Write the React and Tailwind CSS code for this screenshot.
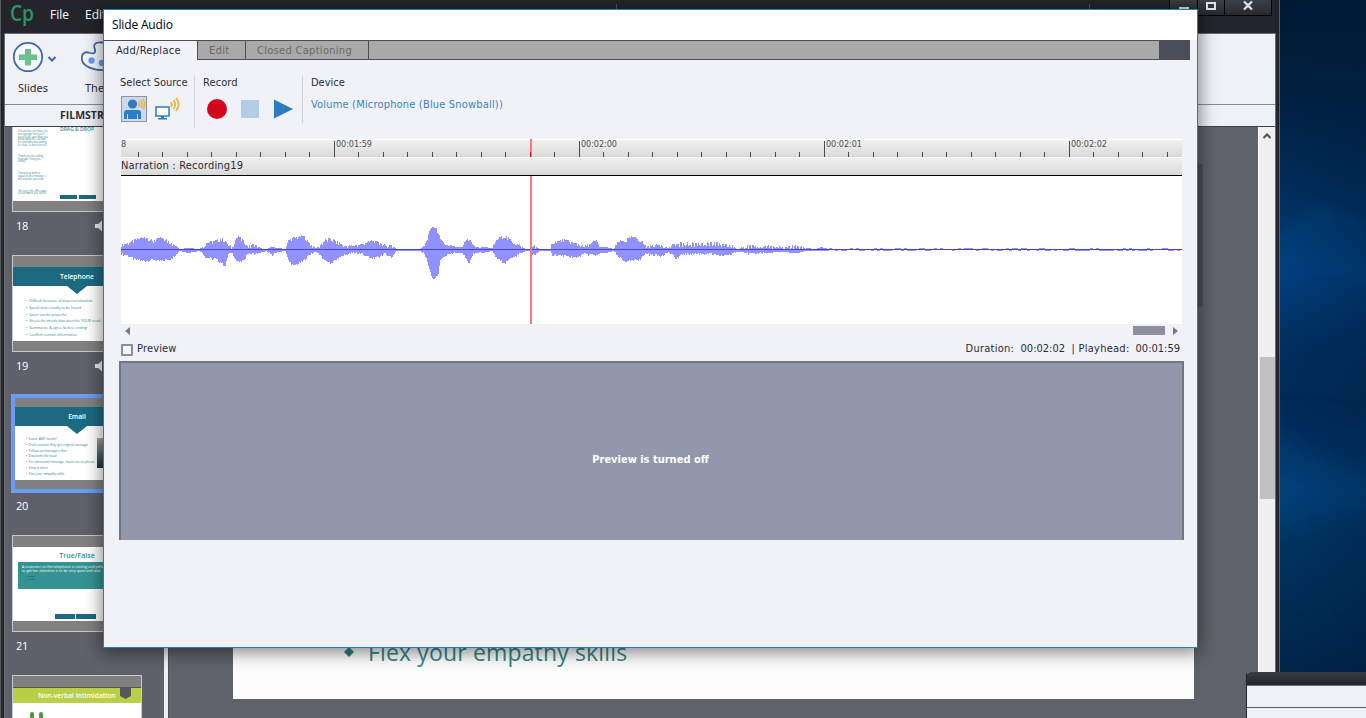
import React from 'react';

// [x, height above the axis, height below the axis]
const ENVELOPE = [
  [0, 5, 4], [7, 7, 6], [14, 10, 10], [24, 13, 11], [31, 9, 10], [39, 12, 11], [47, 9, 10],
  [54, 4, 6], [58, 1, 1], [67, 2, 3], [78, 1, 1], [81, 3, 3], [85, 7, 8], [94, 9, 9],
  [100, 11, 13], [104, 9, 16], [107, 4, 4], [111, 3, 3], [115, 12, 11], [118, 13, 12],
  [122, 9, 11], [126, 4, 4], [133, 5, 4], [141, 1, 2], [145, 1, 1], [150, 3, 5], [157, 2, 2],
  [164, 1, 1], [167, 10, 11], [172, 12, 16], [182, 14, 11], [189, 6, 4], [194, 2, 2],
  [197, 3, 3], [204, 10, 11], [209, 11, 14], [217, 7, 8], [224, 4, 5], [231, 4, 3],
  [241, 6, 4], [250, 9, 9], [257, 8, 7], [264, 4, 4], [270, 5, 8], [275, 1, 1], [299, 1, 1],
  [303, 4, 4], [306, 12, 12], [308, 19, 20], [311, 23, 29], [314, 22, 29], [317, 18, 23],
  [319, 10, 11], [324, 5, 6], [334, 3, 3], [341, 3, 3], [344, 9, 8], [348, 12, 13],
  [352, 4, 4], [359, 2, 2], [361, 3, 3], [371, 2, 1], [374, 8, 7], [379, 13, 11],
  [384, 14, 13], [389, 10, 9], [396, 6, 5], [404, 1, 1], [409, 1, 1], [413, 4, 6],
  [418, 1, 1], [429, 1, 1], [431, 8, 5], [441, 10, 6], [454, 7, 8], [462, 3, 4],
  [469, 6, 5], [475, 9, 6], [479, 3, 3], [485, 3, 3], [492, 1, 1], [497, 8, 7],
  [504, 10, 12], [511, 13, 11], [519, 10, 9], [524, 4, 4], [539, 5, 6], [547, 2, 2],
  [551, 5, 5], [555, 6, 9], [562, 7, 4], [589, 7, 4], [597, 7, 6], [609, 5, 5],
  [616, 1, 2], [621, 3, 2], [629, 4, 4], [644, 4, 3], [659, 3, 2], [676, 4, 3],
  [685, 2, 1], [694, 1, 1], [700, 3, 1], [707, 1, 1], [1061, 1, 1],
];

const noise = (x) => {
  const v = Math.sin(x * 12.9898) * 43758.5453;
  return v - Math.floor(v);
};

const buildWave = () => {
  let d = '';
  let seg = 0;
  for (let x = 0; x < 1061; x++) {
    while (ENVELOPE[seg + 1][0] < x) seg++;
    const [x0, u0, d0] = ENVELOPE[seg];
    const [x1, u1, d1] = ENVELOPE[seg + 1];
    const t = (x - x0) / (x1 - x0);
    let up = u0 + (u1 - u0) * t;
    let down = d0 + (d1 - d0) * t;
    const n = noise(x);
    if (up > 3) up += n > 0.75 ? 1 : n < 0.3 ? -2 : 0;
    if (down > 3) down += n < 0.2 ? 1 : n > 0.6 ? -1 : 0;
    if (x > 555 && x < 685 && x % 3 === 0) up *= 0.5;
    if (x > 707) {
      const m = noise(Math.floor(x / 3));
      up = m < 0.35 ? 2 : 0;
      down = m > 0.6 ? 1 : 0;
    }
    d += `M${x} ${74 - Math.round(up)}h1V${74 + Math.round(down)}h-1z`;
  }
  return d;
};

const WAVE = buildWave();

const TICKS = Array.from({ length: 43 }, (_, i) => ({
  x: Math.floor(213.2 + (i - 8) * 24.5),
  major: (i - 8) % 10 === 0,
}));

const TIMES = ['00:01:59', '00:02:00', '00:02:01', '00:02:02'];

function Speaker() {
  return (
    <svg width="14" height="12" viewBox="0 0 14 12" fill="#eee">
      <path d="M0 4h3l4-3.500v11L3 8H0z" />
      <path d="M8.500 3v6" fill="none" stroke="#eee" strokeDasharray="2 1.500" />
    </svg>
  );
}

function Waves({ className }) {
  return (
    <svg className={className} width="10" height="15" viewBox="0 0 10 15" fill="none" stroke="#eab84a" strokeWidth="1.900">
      <path d="M1 5q1.500 2.500 0 5M3.500 3q3.300 4.500 0 9M6 1q5.500 6.500 0 13" />
    </svg>
  );
}

function Thumb({ number, selected, audio, children }) {
  return (
    <div className="h-[140px] shrink-0">
      <div
        className={
          selected
            ? '-mx-px -mt-px h-[99px] border-4 border-[#6b9bf5] bg-[#808080] pt-[9px]'
            : 'h-[97px] border border-[#c9c9cc] bg-[#808080] pt-[11px]'
        }
      >
        <div className={selected ? 'h-[73px] overflow-hidden bg-white' : 'h-[74px] overflow-hidden bg-white'}>{children}</div>
      </div>
      {number && (
        <div className={selected ? 'flex items-center pt-[5px] pl-1 text-[11px] leading-4 text-white' : 'flex items-center pt-[6px] pl-1 text-[11px] leading-4 text-white'}>
          <span className="w-[79px] tracking-[-.4px]">{number}</span>
          {audio && <Speaker />}
        </div>
      )}
    </div>
  );
}

function BulletSlide({ title, items, tight, photo }) {
  return (
    <div>
      <div className="h-[19px] bg-[#1b6a80] pt-[4px] text-center text-[6.700px] leading-[12px] font-semibold text-white">{title}</div>
      <svg className="mx-auto block" width="20" height="8" viewBox="0 0 20 8">
        <path d="M0 0h20l-10 8z" fill="#1b6a80" />
      </svg>
      <div className="flex">
        <ul className={tight ? 'w-[82px] pl-[11px] pt-[3px]' : 'w-full pl-[13px] pt-[4px]'}>
          {items.map((item) => (
            <li
              key={item}
              className={
                tight
                  ? 'text-[3.200px] leading-[5.750px] whitespace-nowrap text-[#2f878b]'
                  : 'text-[3.620px] leading-[6.800px] whitespace-nowrap text-[#2f878b]'
              }
            >
              •&nbsp; {item}
            </li>
          ))}
        </ul>
        {photo && <div className="mt-[4px] h-[30px] w-[30px] bg-linear-to-b from-[#a4a6a8] to-[#17313f]" />}
      </div>
    </div>
  );
}

function Filmstrip() {
  return (
    <div className="h-full w-[159px] shrink-0 overflow-hidden bg-[#5e6169] pl-[7px] font-['Open_Sans',sans-serif]">
      <div className="-mt-[12px] flex w-[130px] flex-col">
        <Thumb number="18" audio>
          <div className="flex">
            <div className="w-[35px] pt-[3px] pl-[5px] text-[2.600px] leading-[2.800px] text-[#2f878b]">
              <p>It looks like you have the wrong page and you’ll need to be sure that you know what the call was for and who was asking for help. Is that correct?</p>
              <p className="mt-[8px]">Thank you for calling, how can I help you today?</p>
              <p className="mt-[9px]">I know you wish to speak to the manager. I will transfer you now.</p>
              <p className="mt-[9px]">I’m sorry, the office was closed when you called.</p>
            </div>
            <div className="flex flex-col items-center pl-[9px]">
              <div className="w-[40px] text-center text-[5px] leading-[5px] font-semibold whitespace-nowrap text-[#3a8f93]">DRAG &amp; DROP</div>
              <div className="mt-[63px] flex gap-[2px] pl-[1px]">
                <div className="h-[4px] w-[17px] bg-[#1b6a80]" />
                <div className="h-[4px] w-[17px] bg-[#1b6a80]" />
              </div>
            </div>
          </div>
        </Thumb>
        <Thumb number="19" audio>
          <BulletSlide
            title="Telephone"
            items={[
              'Difficult because of depersonalization',
              'Speak more loudly to be heard',
              'Quiet can be powerful',
              'Stress the words that describe YOUR need',
              'Summarize & agree before ending',
              'Confirm contact information',
            ]}
          />
        </Thumb>
        <Thumb number="20" selected>
          <BulletSlide
            title="Email"
            tight
            photo
            items={[
              'Easier AND harder!',
              'Don’t assume they got original message',
              'Follow-up message is fine',
              'Deal with the issue',
              'For emotional message, reach out on phone',
              'Keep it short',
              'Flex your empathy skills',
            ]}
          />
        </Thumb>
        <Thumb number="21">
          <div className="pt-[4px] text-center text-[7px] leading-[10px] font-semibold text-[#2d9090]">True/False</div>
          <div className="mx-[5px] mt-[1px] h-[27px] bg-[#349292] px-[4px] pt-[3px] text-[3.600px] leading-[4px] whitespace-nowrap text-white">
            A customer on the telephone is ranting and yelling. One way
            <br />
            to get her attention is to be very quiet and wait.
            <ul className="mt-[2px] pl-[6px] text-[2.500px] leading-[3px] text-[#17494f]">
              <li>TRUE</li>
              <li>FALSE</li>
            </ul>
          </div>
          <div className="mt-[25px] flex gap-px pl-[42px]">
            <div className="h-[5px] w-[20px] bg-[#1b6a80]" />
            <div className="h-[5px] w-[20px] bg-[#1b6a80]" />
          </div>
        </Thumb>
        <Thumb>
          <div className="flex h-[16px] border-t border-[#555] bg-[#b9cf46]">
            <div className="w-[107px] pt-[2px] pl-[25px] text-[6.700px] leading-[11px] font-semibold whitespace-nowrap text-white">Non-verbal Intimidation</div>
            <svg width="12" height="11" viewBox="0 0 12 11">
              <path d="M0 0h11v8l-5.500 3L0 8z" fill="#555759" />
            </svg>
          </div>
          <div className="flex gap-[5px] pt-[9px] pl-[17px]">
            <div className="h-[10px] w-[4px] rounded-t-full bg-[#4c9a3a]" />
            <div className="h-[10px] w-[4px] rounded-t-full bg-[#4c9a3a]" />
          </div>
        </Thumb>
      </div>
    </div>
  );
}

function WindowButtons() {
  return (
    <div className="flex h-[16px] w-[103px] border-b border-black bg-linear-to-b from-[#3c4047] to-[#26292f]">
      <div className="flex w-[28px] justify-center border-l border-black pt-[7px]">
        <div className="h-[3px] w-[10px] bg-[#dfe2e6]" />
      </div>
      <div className="flex w-[27px] justify-center border-l border-black pt-[2px]">
        <div className="h-[8px] w-[10px] border-2 border-[#dfe2e6]" />
      </div>
      <div className="flex w-[48px] justify-center border-x border-black pt-px">
        <svg width="10" height="9" viewBox="0 0 10 9">
          <path d="M1 0.500l8 8M9 0.500l-8 8" stroke="#dfe2e6" strokeWidth="2.200" />
        </svg>
      </div>
    </div>
  );
}

function MainWindow() {
  return (
    <div className="absolute top-0 left-0 flex h-[718px] w-[1280px] flex-col border-r border-l border-r-[#5c5e66] border-l-[#5a5b5f] bg-[#24252c] pr-[3px] pl-[3px]">
      <div className="flex h-[33px] shrink-0 justify-between">
        <div className="flex">
          <div className="w-[46px] pl-[6px] font-['Open_Sans',sans-serif] text-[22px] leading-[26px] font-semibold text-[#2f9460]">
            <svg width="30" height="33" viewBox="0 0 30 33">
              <text x="0" y="21" fill="#2f9460" textLength="24" lengthAdjust="spacingAndGlyphs">
                Cp
              </text>
            </svg>
          </div>
          <div className="flex gap-[16px] pt-[6px] font-['Open_Sans',sans-serif] text-[12px] leading-[18px] text-white">
            <span>File</span>
            <span>Edit</span>
          </div>
        </div>
        <div className="flex pr-[4px]">
          <div className="mt-[4px] mr-[472px] h-[6px] w-px bg-[#55575e]" />
          <div className="mt-[4px] mr-[79px] h-[6px] w-px bg-[#55575e]" />
          <WindowButtons />
        </div>
      </div>

      <div className="flex min-h-0 flex-1 flex-col border border-b-0 border-[#6b6c72]">
        <div className="flex h-[70px] shrink-0 bg-[#f0f1f6] pl-[8px] font-['Noto_Sans',sans-serif] text-[11px] text-[#2c2c34]">
          <div className="w-[68px] pt-[7px]">
            <svg width="46" height="32" viewBox="0 0 46 32" fill="none">
              <circle cx="15" cy="16" r="14.200" stroke="#4166ab" strokeWidth="1.800" fill="#f7f9fd" />
              <path d="M12 8h6v5.500h6v5.500h-6v5.500h-6v-5.500h-6v-5.500h6z" fill="#6cc08b" />
              <path d="M35.500 16l3.500 3.500 3.500-3.500" stroke="#4166ab" strokeWidth="2" />
            </svg>
            <div className="mt-[7px] pl-[5px] leading-4">Slides</div>
          </div>
          <div className="w-[60px] pt-[7px]">
            <svg width="40" height="32" viewBox="0 0 40 32" fill="none">
              <path
                d="M19 29C9 28 .5 24 .800 16.500C1 11 5 10.500 9 12C14 13.500 15 11 13.500 7C12 2 16 1 21 1.500C32 2.500 38 9 38 16C38 24 31 30 19 29z"
                stroke="#4166ab"
                strokeWidth="1.800"
                fill="#f7f9fd"
              />
              <circle cx="10.500" cy="19.500" r="3.200" fill="#6b9bf5" />
              <circle cx="21" cy="22" r="3.200" fill="#6b9bf5" />
            </svg>
            <div className="mt-[7px] pl-[4px] leading-4">Themes</div>
          </div>
        </div>
        <div className="h-[22px] shrink-0 border-t border-[#8a8b90] bg-[#f0f1f6] pt-[2px] pl-[55px] font-['Open_Sans',sans-serif] text-[10.500px] leading-[17px] font-bold text-[#2c2c34]">
          FILMSTRIP
        </div>
        <div className="flex min-h-0 flex-1 border-t border-[#3f4046] bg-[#5f6269]">
          <Filmstrip />
          <div className="w-[4px] shrink-0 bg-[#eff0f4]" />
          <div className="flex min-w-0 flex-1 border-l border-[#505258] pl-[64px]">
            <div className="flex h-[572px] w-[961px] items-end bg-[#fdfdfd] pb-[31px] pl-[111px] font-['Open_Sans',sans-serif] text-[#368585]">
              <svg className="mb-[11px]" width="10" height="10" viewBox="0 0 10 10">
                <path d="M5 0l5 5-5 5-5-5z" fill="#2f8080" />
              </svg>
              <span className="pl-[14px] text-[23px] leading-[32px] tracking-[.15px]">Flex your empathy skills</span>
            </div>
            <div className="mt-[37px] h-[143px] w-[9px] bg-[#4b4f56]" />
          </div>
          <div className="flex w-[17px] shrink-0 flex-col items-center border-l border-white bg-[#efefef] pt-[6px]">
            <svg width="8" height="6" viewBox="0 0 8 6" fill="none">
              <path d="M.5 5L4 1.500 7.500 5" stroke="#505050" strokeWidth="2" />
            </svg>
            <div className="mt-[218px] h-[142px] w-[15px] bg-[#c0c0c0]" />
          </div>
        </div>
      </div>
    </div>
  );
}

function Tabs() {
  return (
    <div className="mr-[7px] flex h-[20px] text-[11px] leading-[19px]">
      <div className="w-[93px] border-t border-[#4a4e58] pl-[12px] tracking-[.3px] text-[#2c2c34]">Add/Replace</div>
      <div className="flex flex-1 border border-[#4a4e58] bg-[#a9a9a9] tracking-[.3px] text-[#6a6a6a]">
        <div className="w-[48px] border-r border-[#4a4e58] pl-[11px]">Edit</div>
        <div className="w-[123px] border-r border-[#4a4e58] pl-[11px]">Closed Captioning</div>
        <div className="flex-1" />
        <div className="w-[30px] bg-[#4a4e58]" />
      </div>
    </div>
  );
}

function Toolbar() {
  return (
    <div className="flex h-[62px] pl-[16px] text-[11px] leading-[14px] text-[#2c2c34]">
      <div className="h-[52px] w-[75px] border-r border-[#d3d4da]">
        <div className="whitespace-nowrap">Select Source</div>
        <div className="mt-[6px] flex pl-px">
          <div className="flex h-[26px] w-[26px] border border-[#8e93ad] bg-[#cfd9e8] pt-px pl-[2px]">
            <svg width="22" height="22" viewBox="0 0 22 22">
              <circle cx="8.500" cy="6" r="4.600" fill="#2b7cc0" />
              <path d="M0 21v-6q0-3 3-3h11q3 0 3 3v6h-3v-5h-1v5H4v-5H3v5z" fill="#2b7cc0" />
              <path d="M14.500 4q1.200 2 0 4M16.500 2.500q2.500 3.500 0 7M19 1q3.500 5 0 10" fill="none" stroke="#eab84a" strokeWidth="1.800" />
            </svg>
          </div>
          <div className="flex pl-[8px]">
            <svg className="mt-[10px]" width="15" height="14" viewBox="0 0 15 14">
              <rect x="1" y="1" width="13" height="9" fill="#fff" stroke="#2b7cc0" strokeWidth="1.500" />
              <path d="M6 10h3v2h3v1.500H3V12h3z" fill="#2b7cc0" />
            </svg>
            <Waves className="mt-px" />
          </div>
        </div>
      </div>
      <div className="h-[47px] w-[108px] border-r border-[#d3d4da] pl-[8px]">
        <div className="tracking-[.1px]">Record</div>
        <div className="mt-[9px] flex items-center pl-[4px]">
          <div className="h-[20px] w-[20px] rounded-full bg-[#d3051b]" />
          <div className="ml-[14px] h-[18px] w-[18px] bg-[#b4cde6]" />
          <svg className="ml-[15px]" width="19" height="20" viewBox="0 0 19 20">
            <path d="M0 .5l19 9.500-19 9.500z" fill="#2b7cc0" />
          </svg>
        </div>
      </div>
      <div className="pl-[8px]">
        <div>Device</div>
        <div className="mt-[8px] tracking-[.18px] text-[#3b83c4]">Volume (Microphone (Blue Snowball))</div>
      </div>
    </div>
  );
}

function Timeline() {
  return (
    <div className="ml-[17px] w-[1061px]">
      <svg className="block" width="1061" height="19" viewBox="0 0 1061 19">
        <defs>
          <linearGradient id="ruler" x1="0" y1="0" x2="0" y2="1">
            <stop offset="0" stopColor="#f3f3f3" />
            <stop offset="1" stopColor="#d9d9d9" />
          </linearGradient>
        </defs>
        <rect width="1061" height="18" fill="url(#ruler)" />
        <rect width="1061" height="1" fill="#fff" />
        <rect y="18" width="1061" height="1" fill="#fff" />
        {TICKS.map(({ x, major }) => (
          <rect key={x} x={x} y={major ? 2 : 13} width="1" height={major ? 16 : 5} fill="#4c4c4c" />
        ))}
        <g fill="#505050" className="font-['DejaVu_Sans_Condensed','Noto_Sans',sans-serif] text-[9px]">
          <text x="0" y="8">8</text>
          {TIMES.map((time, i) => (
            <text key={time} x={215 + i * 245} y="8" textLength="36">
              {time}
            </text>
          ))}
        </g>
        <rect x="409" width="2" height="18" fill="#f07c7c" />
        <rect x="409" y="13" width="1" height="5" fill="#c01010" />
      </svg>
      <div className="h-[18px] border-b border-black bg-linear-to-b from-[#f0f0f0] to-[#dadada] text-[11px] leading-[15px] tracking-[.18px] text-[#2c2c34]">
        Narration : Recording19
      </div>
      <svg className="block bg-white" width="1061" height="148" viewBox="0 0 1061 148" shapeRendering="crispEdges">
        <path d={WAVE} fill="#9191ff" />
        <rect y="73" width="1061" height="1" fill="#4444cc" />
        <rect x="409" width="2" height="148" fill="#f07c7c" />
      </svg>
      <div className="flex h-[13px] items-center pl-[4px]">
        <svg width="5" height="8" viewBox="0 0 5 8">
          <path d="M5 0v8L0 4z" fill="#74788a" />
        </svg>
        <div className="ml-[1003px] h-[9px] w-[32px] bg-[#8f909f]" />
        <svg className="ml-[8px]" width="5" height="8" viewBox="0 0 5 8">
          <path d="M0 0v8l5-4z" fill="#74788a" />
        </svg>
      </div>
    </div>
  );
}

function SlideAudioDialog() {
  return (
    <div className="absolute top-[9px] left-[103px] flex h-[639px] w-[1095px] flex-col border border-[#1f80b4] bg-[#f0f2f8] font-['DejaVu_Sans_Condensed','Noto_Sans',sans-serif] shadow-[0_3px_16px_2px_rgba(0,0,0,0.45)]">
      <div className="h-[30px] shrink-0 bg-white pt-[6px] pl-[8px] font-['Open_Sans',sans-serif] text-[12px] leading-[18px] tracking-[-.15px] text-black">Slide Audio</div>
      <Tabs />
      <div className="h-[16px]" />
      <Toolbar />
      <div className="h-px" />
      <Timeline />
      <div className="flex h-[24px] items-center justify-between pt-px pr-[17px] pl-[17px] text-[11px] text-[#2c2c34]">
        <div className="flex items-center gap-[4px]">
          <div className="h-[12px] w-[12px] border-2 border-[#8b8fa0] bg-[#f5f6fa]" />
          <span className="tracking-[.15px]">Preview</span>
        </div>
        <div className="flex">
          <span className="w-[55px] tracking-[.25px]">Duration:</span>
          <span className="w-[51px]">00:02:02</span>
          <span className="w-[7px]">|</span>
          <span className="w-[57px] tracking-[.25px]">Playhead:</span>
          <span>00:01:59</span>
        </div>
      </div>
      <div className="ml-[15px] flex h-[179px] w-[1065px] items-center justify-center border-2 border-b-0 border-[#73757f] bg-[#9297ab] pt-[18px] pr-[2px] text-[11px] font-bold text-white">
        Preview is turned off
      </div>
    </div>
  );
}

function Wallpaper() {
  return (
    <svg className="absolute top-0 left-[1280px]" width="86" height="718" viewBox="0 0 86 718">
      <defs>
        <linearGradient id="sky" x1="0" y1="0" x2="0" y2="1">
          <stop offset="0" stopColor="#001a36" />
          <stop offset=".12" stopColor="#00203f" />
          <stop offset=".25" stopColor="#002c58" />
          <stop offset=".38" stopColor="#004180" />
          <stop offset=".48" stopColor="#003060" />
          <stop offset=".56" stopColor="#002d5a" />
          <stop offset=".68" stopColor="#00427c" />
          <stop offset=".78" stopColor="#003666" />
          <stop offset=".88" stopColor="#002a52" />
          <stop offset="1" stopColor="#002040" />
        </linearGradient>
        <linearGradient id="fade" x1="0" y1="0" x2="1" y2="0">
          <stop offset="0" stopColor="#001c3c" stopOpacity="0" />
          <stop offset="1" stopColor="#001c3c" stopOpacity=".35" />
        </linearGradient>
        <filter id="soften" x="-20%" y="-20%" width="140%" height="140%">
          <feGaussianBlur stdDeviation="4" />
        </filter>
      </defs>
      <rect width="86" height="718" fill="url(#sky)" />
      <g filter="url(#soften)">
        <path d="M0 232L40 203L86 220V280L0 263z" fill="#0a4a86" opacity=".3" />
        <path d="M0 533L86 512V640L50 600L0 615z" fill="#002850" opacity=".3" />
        <path d="M0 400L60 402L86 420V470L30 450L0 430z" fill="#00264c" opacity=".25" />
      </g>
      <rect width="86" height="718" fill="url(#fade)" />
    </svg>
  );
}

function CornerPanel() {
  return (
    <div className="absolute top-[672px] left-[1246px] flex h-[46px] w-[120px] flex-col rounded-tl-[3px] border-l border-[#24262b] bg-[#f0f1f6]">
      <div className="h-[13px] shrink-0 rounded-tl-[3px] bg-linear-to-b from-[#3b3e42] to-[#222529]" />
      <div className="h-[23px] shrink-0 border-t border-b border-t-[#707278] border-b-[#55575e]" />
    </div>
  );
}

export default function App() {
  return (
    <div className="relative h-[718px] w-[1366px] overflow-hidden bg-[#002040]">
      <Wallpaper />
      <MainWindow />
      <SlideAudioDialog />
      <CornerPanel />
    </div>
  );
}
